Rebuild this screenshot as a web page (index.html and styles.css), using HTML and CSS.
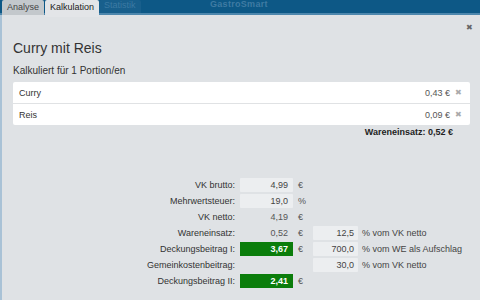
FILE: index.html
```html
<!DOCTYPE html>
<html lang="de">
<head>
    <meta charset="UTF-8">
    <title>Kalkulation</title>
    <link rel="stylesheet" href="styles.css">
</head>
<body>
    <div class="topbar">
        <div class="tabs">
            <span class="tab">Analyse</span>
            <span class="tab active">Kalkulation</span>
            <span class="tab ghost">Statistik</span>
        </div>
        <div class="brand">GastroSmart</div>
    </div>

    <div class="modal">
        <button class="close-btn">&#x2716;</button>
        <h2 class="recipe-title">Curry mit Reis</h2>
        <div class="portion">Kalkuliert für 1 Portion/en</div>

        <div class="item-list">
            <div class="item-row">
                <span class="item-name">Curry</span>
                <span class="item-price">0,43 €</span>
                <span class="item-del">&#x2716;</span>
            </div>
            <div class="item-row">
                <span class="item-name">Reis</span>
                <span class="item-price">0,09 €</span>
                <span class="item-del">&#x2716;</span>
            </div>
        </div>
        <div class="total">Wareneinsatz: 0,52 €</div>

        <div class="calc">
            <div class="calc-row">
                <span class="calc-label">VK brutto:</span>
                <span class="calc-value field">4,99</span>
                <span class="calc-unit">€</span>
            </div>
            <div class="calc-row">
                <span class="calc-label">Mehrwertsteuer:</span>
                <span class="calc-value field">19,0</span>
                <span class="calc-unit">%</span>
            </div>
            <div class="calc-row">
                <span class="calc-label">VK netto:</span>
                <span class="calc-value">4,19</span>
                <span class="calc-unit">€</span>
            </div>
            <div class="calc-row">
                <span class="calc-label">Wareneinsatz:</span>
                <span class="calc-value">0,52</span>
                <span class="calc-unit">€</span>
                <span class="calc-pct field">12,5</span>
                <span class="calc-note">% vom VK netto</span>
            </div>
            <div class="calc-row">
                <span class="calc-label">Deckungsbeitrag I:</span>
                <span class="calc-value good">3,67</span>
                <span class="calc-unit">€</span>
                <span class="calc-pct field">700,0</span>
                <span class="calc-note">% vom WE als Aufschlag</span>
            </div>
            <div class="calc-row">
                <span class="calc-label">Gemeinkostenbeitrag:</span>
                <span class="calc-value"></span>
                <span class="calc-unit"></span>
                <span class="calc-pct field">30,0</span>
                <span class="calc-note">% vom VK netto</span>
            </div>
            <div class="calc-row">
                <span class="calc-label">Deckungsbeitrag II:</span>
                <span class="calc-value good">2,41</span>
                <span class="calc-unit">€</span>
            </div>
        </div>
    </div>
</body>
</html>
```

FILE: styles.css
```css
html, body {
    margin: 0;
    height: 100%;
    overflow: hidden;
}

body {
    background: #dfe2e5;
    font-family: "Liberation Sans", Arial, sans-serif;
    color: #333;
}

/* Kopfleiste */
.topbar {
    height: 13px;
    background: #0d5886;
    border-bottom: 2px solid #4d87ad;
    display: flex;
    align-items: flex-end;
    position: relative;
}

.tabs {
    display: flex;
    padding-left: 2px;
    gap: 1px;
    height: 14px;
    align-self: flex-start;
}

.tab {
    font-size: 9px;
    line-height: 15px;
    padding: 0 5px;
    background: #c3c8cc;
    color: #444;
    border-radius: 2px 2px 0 0;
    height: 15px;
}

.tab.active {
    background: #e3e5e8;
    color: #222;
    height: 17px;
}

.tab.ghost {
    background: #185f8c;
    color: #3c7aa3;
    height: 13px;
    line-height: 11px;
    margin-left: -1px;
}

.brand {
    position: absolute;
    left: 210px;
    top: -1px;
    font-size: 9px;
    font-weight: bold;
    color: #3f7ba3;
    letter-spacing: 0.3px;
}

/* Modal */
.modal {
    position: relative;
    box-sizing: border-box;
    border-left: 2px solid #a9c2d6;
    padding: 25px 10px 0 11px;
    height: 285px;
}

.close-btn {
    position: absolute;
    right: 7px;
    top: 8px;
    background: transparent;
    border: none;
    padding: 0;
    font-size: 8px;
    color: #666;
}

.recipe-title {
    margin: 0;
    font-size: 14px;
    font-weight: normal;
    color: #333;
}

.portion {
    font-size: 10px;
    margin: 9px 0 6px;
    color: #333;
}

.item-list {
    background: #fff;
    border-radius: 2px;
}

.item-row {
    display: flex;
    align-items: center;
    height: 21px;
    padding: 0 8px 0 6px;
    font-size: 9px;
    color: #333;
}

.item-row + .item-row {
    border-top: 1px solid #e0e2e4;
}

.item-name {
    flex: 1;
}

.item-price {
    color: #555;
}

.item-del {
    color: #aaa;
    font-size: 8px;
    margin-left: 5px;
}

.total {
    text-align: right;
    font-size: 9px;
    font-weight: bold;
    color: #222;
    padding: 2px 17px 0 0;
}

/* Kalkulation */
.calc {
    margin-top: 41px;
    display: flex;
    flex-direction: column;
    gap: 2px;
}

.calc-row {
    display: grid;
    grid-template-columns: 224px 53px 14px 45px auto;
    column-gap: 3px;
    align-items: center;
    height: 14px;
    font-size: 9px;
}

.calc-label {
    text-align: right;
    padding-right: 2px;
    color: #333;
}

.calc-value {
    text-align: right;
    padding: 0 5px;
    line-height: 14px;
    color: #555;
}

.field {
    background: #eceef0;
    border-radius: 1px;
    color: #444;
}

.good {
    background: #0b7d0b;
    color: #fff;
    font-weight: bold;
}

.calc-unit {
    color: #555;
    padding-left: 2px;
}

.calc-pct {
    text-align: right;
    padding: 0 4px;
    line-height: 14px;
}

.calc-note {
    color: #444;
    padding-left: 1px;
}
```
